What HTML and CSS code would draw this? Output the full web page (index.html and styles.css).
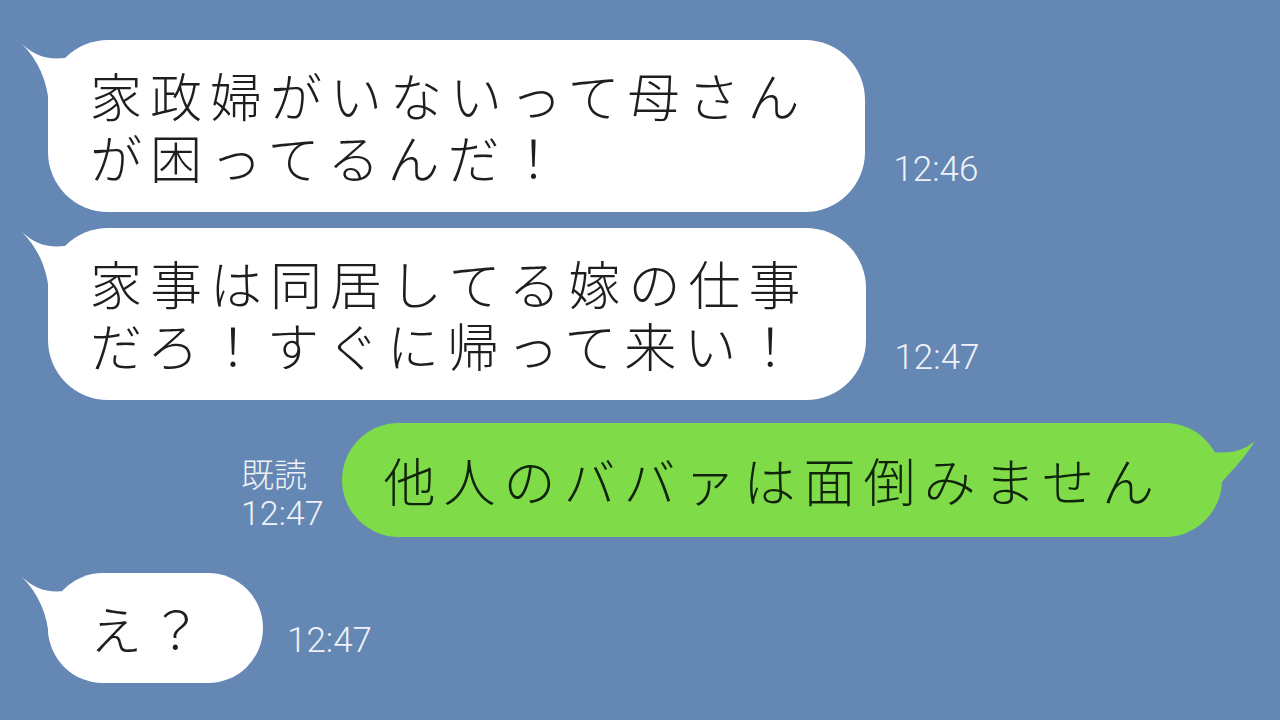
FILE: index.html
```html
<!DOCTYPE html>
<html lang="ja">
<head>
<meta charset="utf-8">
<title>Chat</title>
<link rel="stylesheet" href="styles.css">
</head>
<body>
<div class="chat">
  <div class="row left r1">
    <div class="bubble white">
      <svg class="tail tail-left" width="60" height="70" viewBox="0 0 60 70"><path d="M0,4 C14,17 30,22 52,16 L52,66 L27,66 C26,42 16,20 0,4 Z" fill="#ffffff"/></svg>
      <p class="msg">家政婦がいないって母さん<br>が困ってるんだ！</p>
    </div>
    <div class="time">12:46</div>
  </div>
  <div class="row left r2">
    <div class="bubble white">
      <svg class="tail tail-left" width="60" height="70" viewBox="0 0 60 70"><path d="M0,4 C14,17 30,22 52,16 L52,66 L27,66 C26,42 16,20 0,4 Z" fill="#ffffff"/></svg>
      <p class="msg">家事は同居してる嫁の仕事<br>だろ！すぐに帰って来い！</p>
    </div>
    <div class="time">12:47</div>
  </div>
  <div class="row right r3">
    <div class="read">
      <span class="read-label">既読</span>
      <span class="read-time">12:47</span>
    </div>
    <div class="bubble green">
      <svg class="tail tail-right" width="70" height="80" viewBox="0 0 70 80"><path d="M67,18 C55,28 42,32 18,28 L18,74 L31,74 L31,62 C42,50 56,36 67,18 Z" fill="#7fdc48"/></svg>
      <p class="msg">他人のババァは面倒みません</p>
    </div>
  </div>
  <div class="row left r4">
    <div class="bubble white short">
      <svg class="tail tail-left" width="60" height="70" viewBox="0 0 60 70"><path d="M0,4 C14,17 30,22 52,16 L52,66 L27,66 C26,42 16,20 0,4 Z" fill="#ffffff"/></svg>
      <p class="msg">え？</p>
    </div>
    <div class="time time-short">12:47</div>
  </div>
</div>
</body>
</html>
```

FILE: styles.css
```css
html, body {
  margin: 0;
  padding: 0;
}

body {
  width: 1280px;
  height: 720px;
  overflow: hidden;
  background: #6587b3;
  font-family: "Noto Sans CJK JP", "Noto Sans", sans-serif;
}

.chat {
  display: flex;
  flex-direction: column;
  padding-top: 40px;
}

.row {
  display: flex;
  align-items: flex-end;
}

.row.left {
  padding-left: 48px;
}

.row.right {
  justify-content: flex-end;
  padding-right: 58px;
}

.r2 { margin-top: 16px; }
.r3 { margin-top: 23px; }
.r4 { margin-top: 36px; }

.bubble {
  position: relative;
  border-radius: 60px;
}

.bubble.white {
  background: #ffffff;
  padding: 24px 58px 24px 42px;
}

.bubble.white.short {
  padding-right: 53px;
}

.bubble.green {
  background: #7fdc48;
  padding: 26px 60px 26px 42px;
}

.msg {
  position: relative;
  margin: 0;
  font-size: 52px;
  font-weight: 300;
  line-height: 62px;
  letter-spacing: 8px;
  color: #1e1e1e;
  white-space: nowrap;
}

.green .msg {
  color: #10240c;
}

.tail {
  position: absolute;
  top: 0;
  display: block;
}

.tail-left {
  left: -26px;
}

.tail-right {
  right: -36px;
}

.time {
  font-family: Roboto, "Noto Sans", sans-serif;
  font-weight: 300;
  font-size: 35px;
  line-height: 35px;
  color: #eef2f8;
  margin-left: 28px;
  margin-bottom: 25px;
}

.time.time-short {
  margin-left: 24px;
}

.read {
  display: flex;
  flex-direction: column;
  margin-right: 18px;
  margin-bottom: 4px;
  color: #eef2f8;
}

.read-label {
  font-family: "Noto Sans CJK JP", sans-serif;
  font-weight: 300;
  font-size: 33px;
  line-height: 40px;
}

.read-time {
  font-family: Roboto, "Noto Sans", sans-serif;
  font-weight: 300;
  font-size: 34px;
  line-height: 40px;
}
```
